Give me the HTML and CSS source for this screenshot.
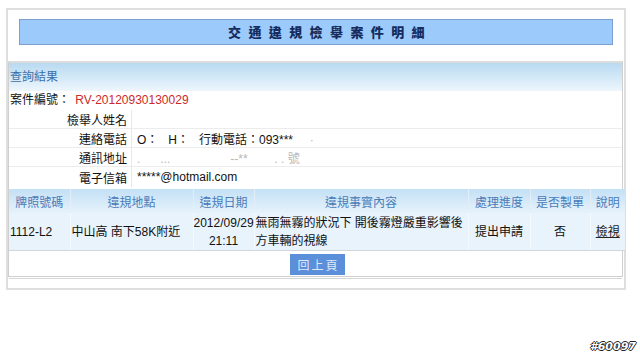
FILE: index.html
```html
<!DOCTYPE html>
<html lang="zh-Hant">
<head>
<meta charset="utf-8">
<title>交通違規檢舉案件明細</title>
<link rel="stylesheet" href="styles.css">
</head>
<body>
<div class="outer">
  <div class="title-area">
    <div class="title-bar">交通違規檢舉案件明細</div>
  </div>
  <div class="panel">
    <div class="panel-head">查詢結果</div>
    <div class="case-row">案件編號： <span class="case-no">RV-20120930130029</span></div>
    <table class="detail">
      <tr><th>檢舉人姓名</th><td></td></tr>
      <tr><th>連絡電話</th><td>O：&nbsp;&nbsp; H：&nbsp;&nbsp; 行動電話：093***<span class="mask">&nbsp;&nbsp;&nbsp;&nbsp;&nbsp;·</span></td></tr>
      <tr><th>通訊地址</th><td><span class="mask">.&nbsp;&nbsp;&nbsp;&nbsp;&nbsp;&nbsp;...&nbsp;&nbsp;&nbsp;&nbsp;&nbsp;&nbsp;&nbsp;&nbsp;&nbsp;&nbsp;&nbsp;&nbsp;&nbsp;&nbsp;&nbsp;&nbsp;&nbsp;&nbsp;--**&nbsp;&nbsp;&nbsp;&nbsp;&nbsp;&nbsp;&nbsp;&nbsp;.&nbsp;.&nbsp;號</span></td></tr>
      <tr><th>電子信箱</th><td>*****@hotmail.com</td></tr>
    </table>
    <table class="cases">
      <colgroup>
        <col class="c1"><col class="c2"><col class="c3"><col class="c4"><col class="c5"><col class="c6"><col class="c7">
      </colgroup>
      <thead>
        <tr><th>牌照號碼</th><th>違規地點</th><th>違規日期</th><th>違規事實內容</th><th>處理進度</th><th>是否製單</th><th>說明</th></tr>
      </thead>
      <tbody>
        <tr>
          <td class="left">1112-L2</td>
          <td class="left">中山高 南下58K附近</td>
          <td>2012/09/29<br>21:11</td>
          <td class="left">無雨無霧的狀況下 開後霧燈嚴重影響後方車輛的視線</td>
          <td>提出申請</td>
          <td>否</td>
          <td><a href="#" class="view">檢視</a></td>
        </tr>
      </tbody>
    </table>
    <div class="btn-row"><button class="back" type="button">回上頁</button></div>
  </div>
</div>
<div class="watermark">#60097</div>
</body>
</html>
```
FILE: styles.css
```css
html, body {
  margin: 0;
  padding: 0;
  background: #ffffff;
}
body {
  font-family: "Liberation Sans", "Noto Sans CJK TC", sans-serif;
  font-size: 12px;
  color: #111111;
  width: 640px;
  height: 356px;
  position: relative;
  overflow: hidden;
}
.outer {
  margin: 8px 0 0 6px;
  width: 616px;
  height: 278px;
  border: 2px solid #dedede;
}
.title-area {
  padding: 9px 11px 16px 11px;
}
.title-bar {
  height: 24px;
  line-height: 24px;
  background: #9ccbfb;
  border: 1px solid #7b9fcf;
  text-align: center;
  font-family: "Noto Sans CJK TC", sans-serif;
  font-weight: 900;
  font-size: 13px;
  color: #162c5e;
  letter-spacing: 7.4px;
  padding-left: 28px;
}
.panel {
  border-top: 2px solid #dcdcdc;
  border-left: 1px solid #cfcfcf;
  border-right: 1px solid #cfcfcf;
  border-bottom: 1px solid #cfcfcf;
  margin-right: 1px;
  height: 213px;
}
.panel-head {
  height: 28px;
  line-height: 28px;
  padding-left: 1px;
  background: linear-gradient(#b8daf2, #eef6fc);
  color: #3b6ea8;
}
.case-row {
  height: 19px;
  line-height: 19px;
  padding-left: 1px;
}
.case-no {
  color: #cc2a2a;
  margin-left: 2px;
}
table {
  border-collapse: collapse;
  border-spacing: 0;
}
.detail {
  width: 100%;
}
.detail th {
  width: 118px;
  text-align: right;
  font-weight: normal;
  padding: 0 4px 0 0;
  height: 18px;
  border-right: 1px solid #e8e8e8;
  border-bottom: 1px solid #ececec;
}
.detail td {
  padding: 0 0 0 5px;
  border-bottom: 1px solid #ececec;
  white-space: pre;
}
.detail tr:last-child th,
.detail tr:last-child td {
  border-bottom: none;
  height: 20px;
}
.mask {
  color: #b8b8b8;
}
.cases {
  width: 100%;
  margin-top: 2px;
  table-layout: fixed;
}
.c1 { width: 61px; }
.c2 { width: 123px; }
.c3 { width: 61px; }
.c4 { width: 214px; }
.c5 { width: 62px; }
.c6 { width: 60px; }
.c7 { width: 35px; }
.cases th {
  height: 24px;
  padding: 0;
  font-weight: normal;
  color: #4a7cb8;
  background: linear-gradient(#c3e0f5, #e6f2fb);
  border-right: 1px solid #e2eef8;
  text-align: center;
}
.cases td {
  height: 37px;
  padding: 0;
  line-height: 18px;
  background: #e8f3fc;
  text-align: center;
  border-right: 1px solid #f4f9fd;
  border-bottom: 1px solid #cfd6dc;
}
.cases th:last-child,
.cases td:last-child {
  border-right: none;
}
.cases td.left {
  text-align: left;
  padding-left: 1px;
}
.view {
  color: #222222;
  text-decoration: underline;
}
.btn-row {
  height: 27px;
  display: flex;
  justify-content: center;
  align-items: center;
  border-bottom: 1px solid #d6d6d6;
}
.back {
  width: 55px;
  height: 21px;
  border: none;
  background: #5b8fda;
  color: #dfe8f7;
  font-family: "Liberation Sans", "Noto Sans CJK TC", sans-serif;
  font-size: 12px;
  letter-spacing: 2px;
  padding: 0 0 0 2px;
  margin-left: 4px;
}
.watermark {
  position: absolute;
  right: 4px;
  bottom: 3px;
  font-family: "DejaVu Sans", sans-serif;
  font-weight: bold;
  font-style: italic;
  font-size: 11px;
  color: #ffffff;
  text-shadow: 1px 0 0 #222, -1px 0 0 #222, 0 1px 0 #222, 0 -1px 0 #222;
}
```
